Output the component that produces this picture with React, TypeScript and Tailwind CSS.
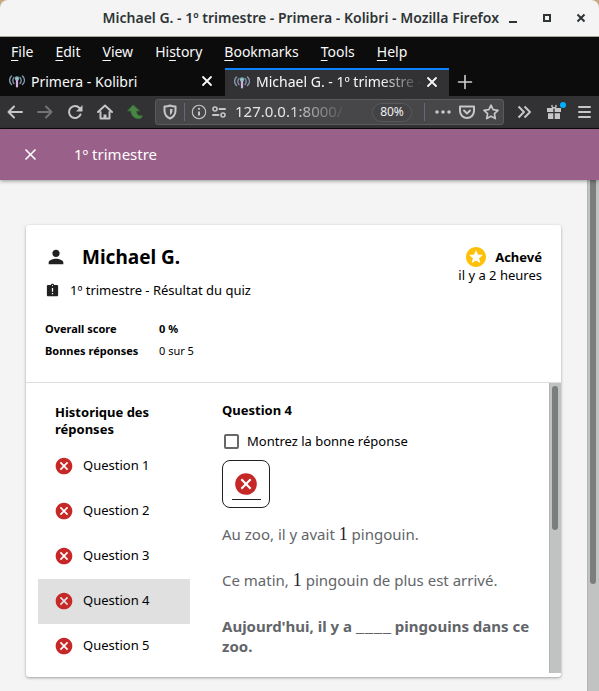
import type { ReactNode } from 'react';
import { MdAssignmentLate, MdCancel, MdClose, MdPerson, MdStars } from 'react-icons/md';

const MENUS: [string, string, string][] = [
  ['', 'F', 'ile'],
  ['', 'E', 'dit'],
  ['', 'V', 'iew'],
  ['Hi', 's', 'tory'],
  ['', 'B', 'ookmarks'],
  ['', 'T', 'ools'],
  ['', 'H', 'elp'],
];

const QUESTIONS = [1, 2, 3, 4, 5];
const CURRENT = 4;

function Glyph({ children, className = 'size-4' }: { children: ReactNode; className?: string }) {
  return (
    <svg
      viewBox="0 0 16 16"
      fill="none"
      stroke="currentColor"
      strokeWidth="2"
      strokeLinecap="round"
      strokeLinejoin="round"
      aria-hidden="true"
      className={`shrink-0 ${className}`}
    >
      {children}
    </svg>
  );
}

function IconButton({ label, children, className = '' }: { label: string; children: ReactNode; className?: string }) {
  return (
    <button type="button" aria-label={label} className={`flex shrink-0 items-center justify-center ${className}`}>
      {children}
    </button>
  );
}

function Favicon() {
  return (
    <Glyph>
      <g strokeWidth="1.4">
        <path d="M2.500 3C0 5.500 0 9 2.500 11.500" stroke="#7f9fb0" />
        <path d="M5 4.500C3.400 6.500 3.400 8.500 5 10.500" stroke="#8a86a8" />
        <path d="M11 4.500c1.600 2 1.600 4 0 6" stroke="#8a86a8" />
        <path d="M13.500 3c2.500 2.500 2.500 6 0 8.500" stroke="#7f9fb0" />
        <circle cx="8" cy="5.500" r="1.500" fill="#9fdcd4" stroke="#7fb5b5" />
        <path d="M8 7.500v6" stroke="#c9b2dc" strokeWidth="2.200" />
      </g>
    </Glyph>
  );
}

function CloseGlyph({ className = 'size-4' }: { className?: string }) {
  return (
    <Glyph className={className}>
      <path d="M4 4l8 8M12 4l-8 8" strokeWidth="1.800" />
    </Glyph>
  );
}

function TitleBar() {
  return (
    <header className="bg-[#c8aa82]">
      <div className="flex h-9 items-center justify-end rounded-t-lg bg-[#f4f4f4] pr-2 text-[#2e3436]">
        <h1 className="whitespace-nowrap pb-px pr-1 text-[14px] font-semibold">
          Michael G. - 1º trimestre - Primera - Kolibri - Mozilla Firefox
        </h1>
        <div className="flex items-center gap-[14px]">
          <IconButton label="Minimize" className="w-5">
            <Glyph><path d="M4 12h8" strokeLinecap="butt" /></Glyph>
          </IconButton>
          <IconButton label="Maximize" className="w-5">
            <Glyph><path d="M5 5h6v6H5z" strokeLinejoin="miter" /></Glyph>
          </IconButton>
          <IconButton label="Close" className="w-5">
            <Glyph><path d="M4.500 4.500l7 7M11.500 4.500l-7 7" strokeLinecap="butt" /></Glyph>
          </IconButton>
        </div>
      </div>
    </header>
  );
}

function MenuBar() {
  return (
    <nav className="flex h-8 items-center gap-[22px] border-t border-[#aaa79f] bg-[#0c0c0d] px-[11px] pb-[2px] text-[14px] text-[#f9f9fa]">
      {MENUS.map(([before, key, after]) => (
        <button key={key + after} type="button">
          {before}
          <span className="underline underline-offset-[3px]">{key}</span>
          {after}
        </button>
      ))}
    </nav>
  );
}

function TabBar() {
  return (
    <div className="flex h-7 bg-[#0c0c0d] text-[14px] text-[#f9f9fa]">
      <div className="flex w-[225px] items-center gap-[6px] pb-[2px] pl-[9px] pr-[10px]">
        <Favicon />
        <span className="flex-1 whitespace-nowrap">Primera - Kolibri</span>
        <IconButton label="Close tab"><CloseGlyph /></IconButton>
      </div>
      <div className="flex w-[224px] items-center gap-[6px] border-t-2 border-[#0a84ff] bg-[#323234] pb-[3px] pl-[9px] pr-[9px]">
        <Favicon />
        <span className="flex-1 whitespace-nowrap [mask-image:linear-gradient(to_right,black_75%,transparent)]">
          Michael G. - 1º trimestre -
        </span>
        <IconButton label="Close tab" className="-ml-1"><CloseGlyph /></IconButton>
      </div>
      <IconButton label="New tab" className="w-8 text-[#cfcfd0]">
        <Glyph><path d="M1.500 8h13M8 1.500v13" strokeWidth="1.600" /></Glyph>
      </IconButton>
    </div>
  );
}

function NavBar() {
  return (
    <div className="flex h-[33px] items-center border-b border-[#0c0c0d] bg-[#323234] px-[7px] text-[#c6c6c7]">
      <div className="flex gap-[14px]">
        <IconButton label="Back"><Glyph><path d="M15 8H1.500M7 2.500L1.500 8 7 13.500" /></Glyph></IconButton>
        <IconButton label="Forward" className="text-[#737375]">
          <Glyph><path d="M1 8h13.500M9 2.500L14.500 8 9 13.500" /></Glyph>
        </IconButton>
        <IconButton label="Reload">
          <Glyph>
            <path d="M13.500 10.500a6 6 0 1 1-1-6.500" />
            <path d="M15.500 1v6.500H9z" fill="currentColor" stroke="none" />
          </Glyph>
        </IconButton>
        <IconButton label="Home">
          <Glyph>
            <path d="M1 8l7-6.500L15 8M3.500 8v6.500h9V8" />
            <path d="M8 14v-3.500" strokeWidth="3" strokeLinecap="butt" />
          </Glyph>
        </IconButton>
        <IconButton label="Go up">
          <Glyph>
            <path d="M6 1L0.500 7H4c0 5 4 8.500 9 7.500 1.500-.400 2-1.500 2.500-3C12 12.500 9.500 11 9.500 7h3z" fill="#478743" stroke="#38703a" strokeWidth=".6" />
          </Glyph>
        </IconButton>
      </div>
      <div className="ml-[12px] flex h-[26px] w-[349px] items-center rounded-[3px] border border-[#5b5b5d] bg-[#474749] pl-[6px] pr-1">
        <Glyph>
          <path d="M8 1.500c2 1 3.500 1 5.500 1v4c0 4-2 6.500-5.500 8-3.500-1.500-5.500-4-5.500-8v-4c2 0 3.500 0 5.500-1z" />
          <path d="M8 5v6c1.500-1 2.500-2.500 2.500-4.500V5z" fill="currentColor" stroke="none" />
        </Glyph>
        <span className="ml-[6px] h-[18px] w-px bg-[#66687a]" />
        <Glyph className="ml-[6px] size-4">
          <circle cx="8" cy="8" r="6.700" strokeWidth="1.100" />
          <path d="M8 7.500v4" strokeLinecap="butt" />
          <circle cx="8" cy="4.800" r="1.100" fill="currentColor" stroke="none" />
        </Glyph>
        <Glyph className="ml-1 size-4">
          <circle cx="4" cy="5" r="2" strokeWidth="1.600" />
          <path d="M8.500 5H14M2 11h5.500" />
          <circle cx="12" cy="11" r="2" strokeWidth="1.600" />
        </Glyph>
        <input
          aria-label="Address"
          readOnly
          value="127.0.0.1:8000/"
          className="ml-[8px] w-[116px] min-w-0 bg-transparent pb-px text-[15px] text-[#e4e4e5] outline-none [mask-image:linear-gradient(to_right,black_45%,transparent_98%)]"
        />
        <button type="button" className="ml-[21px] h-[19px] w-10 rounded-full border border-[#59595b] bg-[#434345] text-[12px] leading-none text-[#f0f0f0]">
          80%
        </button>
        <span className="ml-[12px] h-[18px] w-px bg-[#66687a]" />
        <div className="ml-auto flex gap-2">
          <IconButton label="Page actions">
            <Glyph><path d="M2 8h.01M8 8h.01M14 8h.01" strokeWidth="3.600" /></Glyph>
          </IconButton>
          <IconButton label="Save to Pocket">
            <Glyph>
              <path d="M1 2.500h14V7A7 7 0 0 1 1 7z" />
              <path d="M5 6.500l3 3 3-3" />
            </Glyph>
          </IconButton>
          <IconButton label="Bookmark this page">
            <Glyph><path d="M8 1.200l2.100 4.500 4.900.600-3.600 3.400.900 4.900L8 12.200l-4.300 2.400.900-4.900L1 6.300l4.900-.600z" strokeWidth="1.700" /></Glyph>
          </IconButton>
        </div>
      </div>
      <div className="ml-auto flex gap-[14px]">
        <IconButton label="More tools">
          <Glyph><path d="M2.500 2.500L8 8l-5.500 5.500M8.500 2.500L14 8l-5.500 5.500" strokeLinecap="butt" /></Glyph>
        </IconButton>
        <IconButton label="What's new" className="relative">
          <Glyph>
            <path d="M1 4h6.300v4H1zM8.700 4H15v4H8.700zM2 9.200h5.300V15H2zM8.700 9.200H14V15H8.700z" fill="currentColor" stroke="none" />
            <path d="M8 4C6.500 3.500 5.500 2.500 6 1.500M8 4c1.500-.500 2.500-1.500 2-2.500" strokeWidth="1.400" />
          </Glyph>
          <span className="absolute -right-1 -top-0.5 size-1.5 rounded-full bg-[#00b0ff]" />
        </IconButton>
        <IconButton label="Open menu">
          <Glyph><path d="M3 3h11M3 8h11M3 13h11" /></Glyph>
        </IconButton>
      </div>
    </div>
  );
}

function ReportHeader() {
  return (
    <div className="flex h-[158px] justify-between border-b border-[#dedede] pl-[19px] pr-[19px] pt-[18px]">
      <div>
        <div className="flex items-center gap-[15px]">
          <MdPerson className="size-[22px] text-[#212121]" />
          <h2 className="text-[19px] font-bold leading-7">Michael G.</h2>
        </div>
        <div className="mt-[9px] flex items-center gap-[10px]">
          <MdAssignmentLate className="size-[15px] text-[#212121]" />
          <span className="text-[13px] leading-5">1º trimestre - Résultat du quiz</span>
        </div>
        <table className="mt-[18px] text-left text-[11px] leading-[22px]">
          <tbody>
            <tr>
              <th scope="row" className="w-[114px] font-bold">Overall score</th>
              <td className="font-bold">0 %</td>
            </tr>
            <tr>
              <th scope="row" className="font-bold">Bonnes réponses</th>
              <td>0 sur 5</td>
            </tr>
          </tbody>
        </table>
      </div>
      <div className="pt-[5px] text-right text-[13px] leading-[18px]">
        <div className="flex items-center justify-end gap-[7px] font-bold">
          <MdStars className="-my-1 size-6 text-[#ffc107]" />
          Achevé
        </div>
        <div>il y a 2 heures</div>
      </div>
    </div>
  );
}

function History() {
  return (
    <section className="w-[152px] shrink-0 pt-[21px]">
      <h3 className="pl-[17px] text-[13px] font-bold leading-[17px]">Historique des réponses</h3>
      <ul className="mt-[6px]">
        {QUESTIONS.map((n) => (
          <li key={n}>
            <button
              type="button"
              className={`flex h-[45px] w-full items-center gap-[9px] pb-[2px] pl-4 text-[13px] ${n === CURRENT ? 'bg-[#e0e0e0]' : ''}`}
            >
              <MdCancel className="size-5 text-[#c62828]" />
              Question {n}
            </button>
          </li>
        ))}
      </ul>
    </section>
  );
}

function One() {
  return <span className="font-['Liberation_Serif',serif] text-[18px] leading-none text-[#21242c]">1</span>;
}

function Blank() {
  return (
    <span className="inline-flex gap-px font-['Liberation_Serif',serif] text-[16px] font-normal leading-none">
      <span>_</span>
      <span>_</span>
      <span>_</span>
      <span>_</span>
    </span>
  );
}

function Exercise() {
  return (
    <section className="min-w-0 flex-1 pl-8 pr-4 pt-[17px]">
      <h3 className="text-[13px] font-bold leading-5">Question 4</h3>
      <label className="mt-[11px] flex items-center gap-2 pl-[2px] text-[13px] leading-5">
        <input type="checkbox" className="size-[15px] appearance-none rounded-[2px] border-2 border-[#686868]" />
        Montrez la bonne réponse
      </label>
      <div className="mt-[9px] flex size-12 flex-col items-center justify-end rounded-[8px] border border-[#212121] pb-[7px]">
        <MdCancel className="size-[26px] text-[#c62828]" />
        <span className="mt-[2px] h-px w-[29px] bg-[#212121]" />
      </div>
      <div className="mt-4 flex flex-col gap-[26px] text-[15px] leading-5 text-[#626569]">
        <p>Au zoo, il y avait <One /> pingouin.</p>
        <p>Ce matin, <One /> pingouin de plus est arrivé.</p>
        <p className="font-bold">Aujourd'hui, il y a <Blank /> pingouins dans ce zoo.</p>
      </div>
    </section>
  );
}

export default function App() {
  return (
    <div className="flex min-h-screen flex-col bg-[#f4f4f4] font-['Noto_Sans',sans-serif] text-black">
      <TitleBar />
      <MenuBar />
      <TabBar />
      <NavBar />
      <div className="relative z-10 flex h-[51px] items-center gap-[34px] bg-[#996189] pl-[21px] text-white shadow-[0_1px_4px_rgba(0,0,0,0.4)]">
        <IconButton label="Fermer"><MdClose className="size-[19px]" /></IconButton>
        <span className="text-[15px]">1º trimestre</span>
      </div>
      <div className="flex flex-1">
        <main className="min-w-0 flex-1 px-[26px] pb-[14px] pt-[45px]">
          <article className="rounded-[3px] bg-white shadow-[0_1px_3px_rgba(0,0,0,0.35)]">
            <ReportHeader />
            <div className="flex">
              <div className="flex min-w-0 flex-1 pb-2 pl-3">
                <History />
                <Exercise />
              </div>
              <div className="mb-1 w-3 shrink-0 border-l border-[#b2b4b4] bg-[#c1c3c3] px-[2px] pt-[3px]">
                <div className="h-1/2 w-[6px] rounded-full bg-[#7a7e7e]" />
              </div>
            </div>
          </article>
        </main>
        <div className="w-3 shrink-0 border-l border-[#b2b4b4] bg-[#c1c3c3] px-[2px]">
          <div className="h-[79%] w-[6px] rounded-b-full bg-[#7a7e7e]" />
        </div>
      </div>
    </div>
  );
}
